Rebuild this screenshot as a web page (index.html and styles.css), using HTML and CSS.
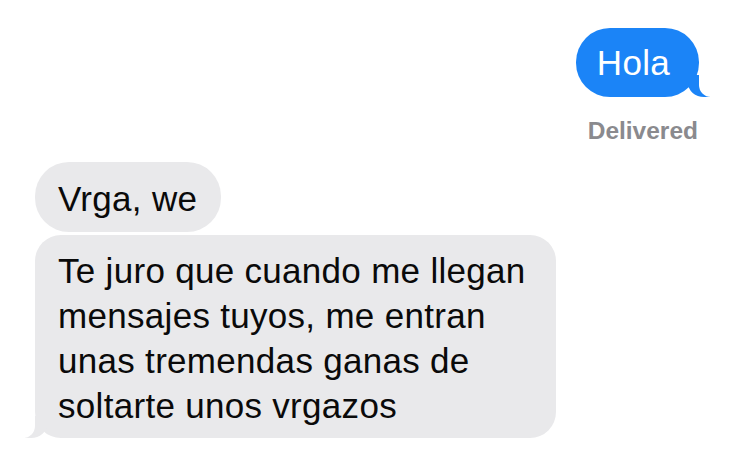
FILE: index.html
```html
<!DOCTYPE html>
<html lang="es">
<head>
    <meta charset="UTF-8">
    <meta name="viewport" content="width=device-width, initial-scale=1.0">
    <title>Mensajes</title>
    <link rel="stylesheet" href="styles.css">
</head>
<body>
    <div class="chat">
        <!-- enviado -->
        <div class="group sent">
            <div class="bubble blue tail">Hola</div>
            <div class="status">Delivered</div>
        </div>

        <!-- recibido -->
        <div class="group received">
            <div class="bubble gray">Vrga, we</div>
            <div class="bubble gray wide tail">Te juro que cuando me llegan mensajes tuyos, me entran unas tremendas ganas de soltarte unos vrgazos</div>
        </div>
    </div>
</body>
</html>
```

FILE: styles.css
```css
* { margin: 0; padding: 0; box-sizing: border-box; }
body {
    font-family: "Liberation Sans", Arial, sans-serif;
    background: #fff; width: 736px; height: 468px; overflow: hidden;
}
.chat { display: flex; flex-direction: column; padding: 28px 37px 0 35px; }
.group { display: flex; flex-direction: column; }
.sent { align-items: flex-end; }
.received { align-items: flex-start; margin-top: 16px; gap: 3px; }

.bubble {
    position: relative; font-size: 35px; line-height: 45px; letter-spacing: 0.3px;
    padding: 14px 24px 11px 23px; border-radius: 34px;
}
.blue { background: #1b84f7; color: #fff; padding: 12px 29px 12px 21px; }
.gray { background: #e9e9eb; color: #0a0a0a; }
.wide { width: 521px; border-radius: 26px; padding: 13px 20px 10px 23px; }

.status {
    font-size: 24.5px; font-weight: bold; color: #8a8a8e;
    line-height: 30px; margin-top: 19px; margin-right: 1px;
}

/* colas de las burbujas */
.tail::before, .tail::after {
    content: ""; position: absolute; bottom: 0; height: 22px;
}
.blue.tail::before {
    right: -11px; width: 22px; background: #1b84f7;
    border-bottom-left-radius: 16px 14px;
}
.blue.tail::after {
    right: -14px; width: 14px; background: #fff;
    border-bottom-left-radius: 12px;
}
.gray.tail::before {
    left: -10px; width: 22px; background: #e9e9eb;
    border-bottom-right-radius: 16px 14px;
}
.gray.tail::after {
    left: -14px; width: 14px; background: #fff;
    border-bottom-right-radius: 12px;
}
```
